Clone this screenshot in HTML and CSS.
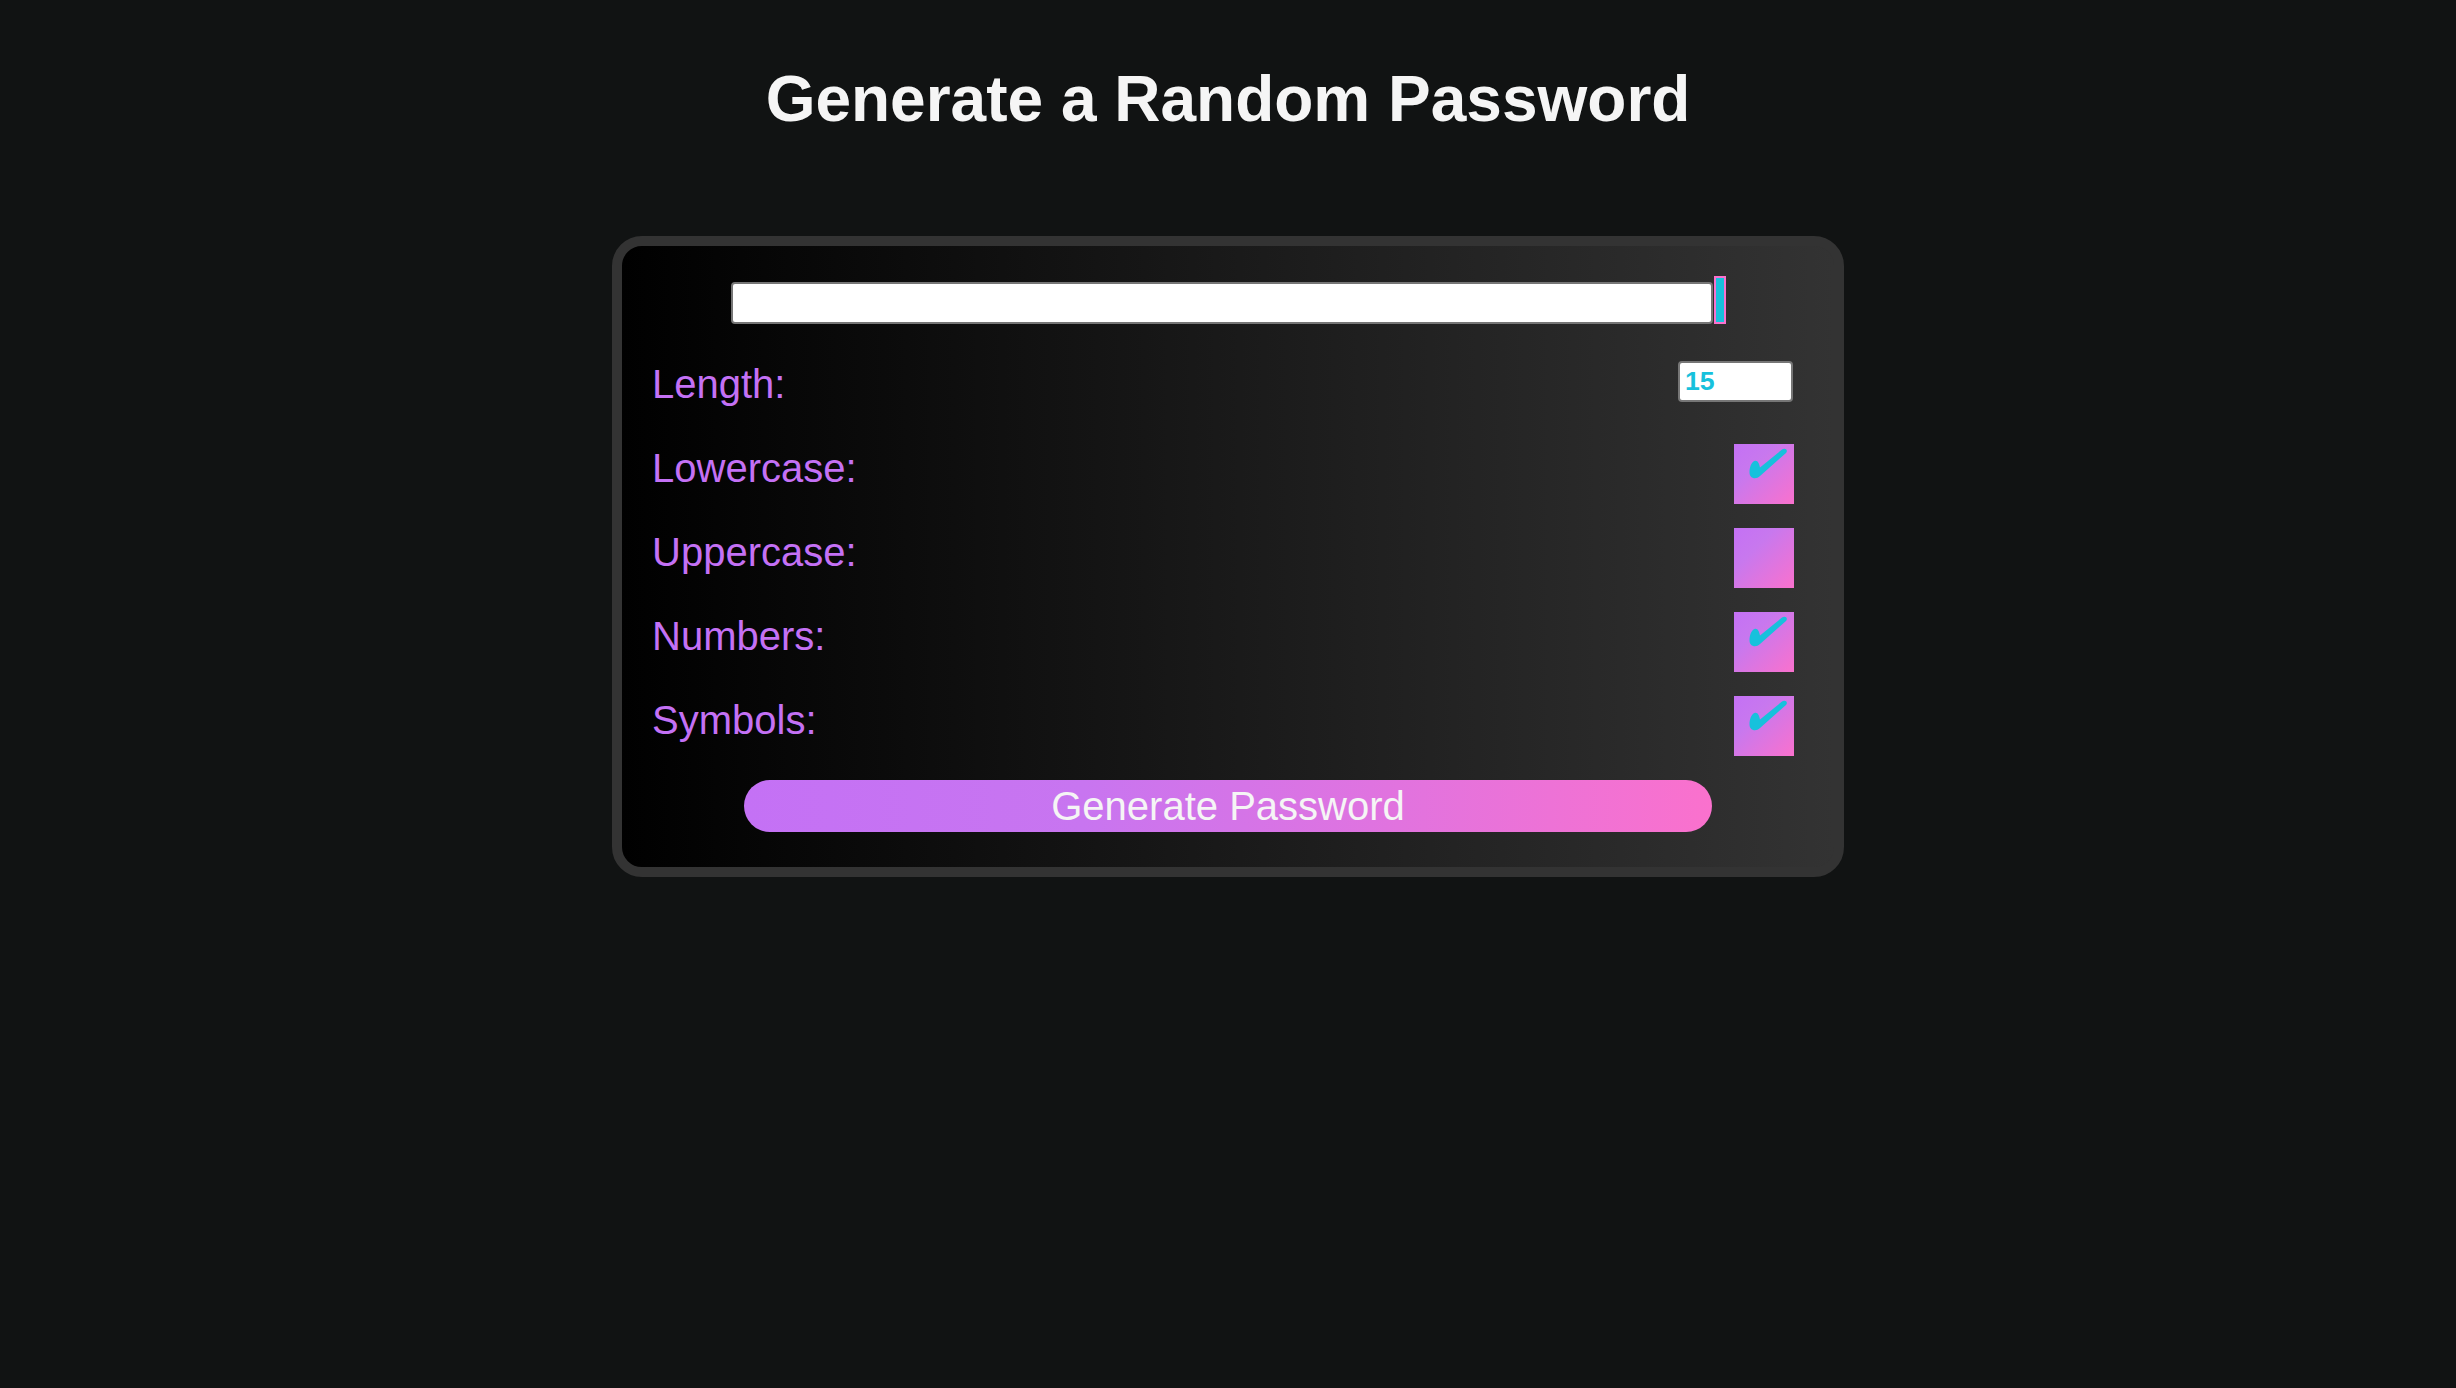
FILE: index.html
```html
<!DOCTYPE html>
<html lang="en">
<head>
<meta charset="utf-8">
<title>Password Generator</title>
<link rel="stylesheet" href="styles.css">
</head>
<body>
<h1 class="title">Generate a Random Password</h1>
<div class="card">
  <div class="result-row">
    <input class="result" type="text" readonly>
    <button class="copy-btn" aria-label="Copy password"></button>
  </div>
  <div class="settings">
    <div class="setting">
      <label class="setting-label">Length:</label>
      <input class="length" type="text" value="15">
    </div>
    <div class="setting">
      <label class="setting-label">Lowercase:</label>
      <span class="check"><svg class="tick" viewBox="0 0 60 60"><path d="M20.5 17 C23.5 16 25 19 26 23.5 L48 5.5 C51 3.5 54.5 6 52 9 L26 32 C22 36 15.5 34.5 15.5 28.5 C15.5 23 17.5 18 20.5 17 Z"/></svg></span>
    </div>
    <div class="setting">
      <label class="setting-label">Uppercase:</label>
      <span class="check"></span>
    </div>
    <div class="setting">
      <label class="setting-label">Numbers:</label>
      <span class="check"><svg class="tick" viewBox="0 0 60 60"><path d="M20.5 17 C23.5 16 25 19 26 23.5 L48 5.5 C51 3.5 54.5 6 52 9 L26 32 C22 36 15.5 34.5 15.5 28.5 C15.5 23 17.5 18 20.5 17 Z"/></svg></span>
    </div>
    <div class="setting">
      <label class="setting-label">Symbols:</label>
      <span class="check"><svg class="tick" viewBox="0 0 60 60"><path d="M20.5 17 C23.5 16 25 19 26 23.5 L48 5.5 C51 3.5 54.5 6 52 9 L26 32 C22 36 15.5 34.5 15.5 28.5 C15.5 23 17.5 18 20.5 17 Z"/></svg></span>
    </div>
  </div>
  <div class="generate-row">
    <button class="generate">Generate Password</button>
  </div>
</div>
</body>
</html>
```
FILE: styles.css
```css
* {
  box-sizing: border-box;
}

body {
  margin: 0;
  background: #111313;
  font-family: "Liberation Sans", Arial, Helvetica, sans-serif;
}

.title {
  margin: 62px 0 0;
  font-size: 64px;
  line-height: 74px;
  font-weight: 700;
  color: #f5f5f5;
  text-align: center;
}

.card {
  width: 1232px;
  margin: 100px auto 0;
  border: 10px solid #333333;
  border-radius: 30px;
  background: linear-gradient(to right, #000000, #333333);
  padding: 30px 0 35px;
}

.result-row {
  display: flex;
  justify-content: center;
  align-items: flex-end;
  gap: 1px;
}

.result {
  width: 982px;
  height: 42px;
  border: 2px solid #767676;
  border-radius: 4px;
  background: #ffffff;
  margin: 0;
  padding: 2px 4px;
}

.copy-btn {
  width: 12px;
  height: 48px;
  border: 2px solid #fa71cd;
  background: #17c1dc;
  padding: 0;
  margin: 0;
}

.settings {
  margin-top: 36px;
  padding: 0 40px 0 30px;
  display: flex;
  flex-direction: column;
  gap: 24px;
}

.setting {
  height: 60px;
  display: flex;
  justify-content: space-between;
  align-items: flex-start;
}

.setting-label {
  font-size: 40px;
  line-height: 48px;
  color: #c471f5;
}

.length {
  width: 115px;
  height: 41px;
  margin: 1px 1px 0 0;
  border: 2px solid #767676;
  border-radius: 4px;
  background: #ffffff;
  padding: 2px 5px;
  font-family: "Liberation Sans", Arial, sans-serif;
  font-size: 26.67px;
  font-weight: 700;
  color: #17c1dc;
}

.check {
  display: block;
  width: 60px;
  height: 60px;
  background: linear-gradient(135deg, #c471f5 0%, #c878ee 35%, #fa71cd 100%);
}

.tick {
  display: block;
  width: 60px;
  height: 60px;
  fill: #17c1dc;
}

.generate-row {
  margin-top: 24px;
  display: flex;
  justify-content: center;
}

.generate {
  width: 968px;
  height: 52px;
  border: none;
  border-radius: 26px;
  background: linear-gradient(to right, #c471f5 0%, #c875f0 35%, #fa71cd 100%);
  color: #f5f5f5;
  font-family: "Liberation Sans", Arial, sans-serif;
  font-size: 40px;
  line-height: 44px;
  padding: 0;
  display: flex;
  align-items: center;
  justify-content: center;
}
```
